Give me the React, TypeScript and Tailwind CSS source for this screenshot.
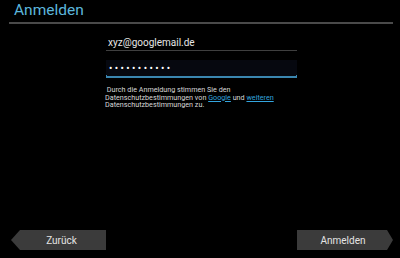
import React from 'react';

const font = { fontFamily: "Roboto, 'Liberation Sans', sans-serif" };

export default function App() {
  return (
    <div className="w-[400px] h-[258px] bg-black flex flex-col overflow-hidden" style={font}>
      {/* Title bar */}
      <div className="px-[9px]">
        <div className="h-[22px] pl-[5px] flex items-center text-[15.5px] leading-none text-[#5cb6dc]">Anmelden</div>
        <div className="h-[2px] w-[384px] bg-[#4a4a4a]" />
      </div>

      {/* Form */}
      <div className="ml-[106px] w-[191px] mt-[10px] flex flex-col">
        <div className="h-[16px] px-[2px] flex items-center text-[10px] text-[#e6e6e6]">xyz@googlemail.de</div>
        <div className="h-px bg-[#3f3f3f]" />

        <div className="mt-[9px] h-[16px] bg-[#06080f] pl-[3px] flex items-center text-[10px] tracking-[2.4px] text-white">
          •••••••••••
        </div>
        <div className="relative h-[2px] bg-[#3a86b0]">
          <div className="absolute left-0 bottom-0 w-px h-[3px] bg-[#3a86b0]" />
          <div className="absolute right-0 bottom-0 w-px h-[3px] bg-[#3a86b0]" />
        </div>

        <p className="mt-[8px] -ml-[1px] text-[7.2px] leading-[7.6px] text-[#d8d8d8]">
          &nbsp;Durch die Anmeldung stimmen Sie den<br />
          Datenschutzbestimmungen von{' '}
          <span className="text-[#33a5df] underline">Google</span> und{' '}
          <span className="text-[#33a5df] underline">weiteren</span>
          <br />
          Datenschutzbestimmungen zu.
        </p>
      </div>

      {/* Bottom buttons */}
      <div className="mt-auto mb-[8px] px-[7px] flex justify-between items-center">
        <div className="ml-[4px] w-[95px] h-[20px] bg-[#3b3b3b] [clip-path:polygon(9px_0,100%_0,100%_100%,9px_100%,0_50%)] flex items-center justify-center pl-[6px] text-[10px] text-[#e4e4e4]">
          Zurück
        </div>
        <div className="w-[96px] h-[20px] bg-[#3b3b3b] [clip-path:polygon(0_0,calc(100%-6px)_0,100%_50%,calc(100%-6px)_100%,0_100%)] flex items-center justify-center pr-[4px] text-[10px] text-[#e4e4e4]">
          Anmelden
        </div>
      </div>
    </div>
  );
}
